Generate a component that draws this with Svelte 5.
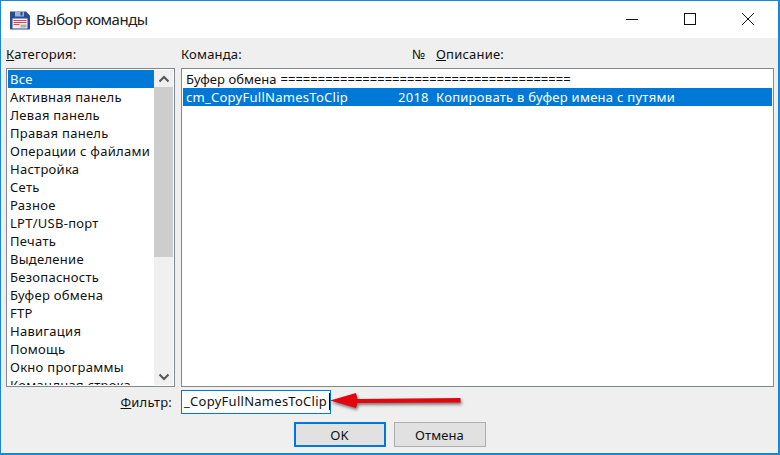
<script>
  const cats = ['Все','Активная панель','Левая панель','Правая панель','Операции с файлами','Настройка','Сеть','Разное','LPT/USB-порт','Печать','Выделение','Безопасность','Буфер обмена','FTP','Навигация','Помощь','Окно программы','Командная строка'];
  const eq = '='.repeat(39);
</script>

<div class="win">
  <header class="title">
    <svg class="appicon" width="20" height="20" viewBox="0 0 20 20">
      <path d="M0 1.500h16l4 4v13a1 1 0 0 1-1 1h-18a1 1 0 0 1-1-1z" fill="#2b4c94"/>
      <rect x="5" y="1" width="9" height="5.500" fill="#9db2d8"/>
      <rect x="10.500" y="2" width="2" height="3.500" fill="#2b4c94"/>
      <rect x="2.500" y="8.500" width="15" height="10" fill="#f6eef0"/>
      <path d="M3.500 10.500h13M3.500 12.500h13M3.500 14.500h6" stroke="#e0474f" stroke-width="1"/>
      <path d="M10.500 14.500h6v3h-6z" fill="#aab0c0"/>
    </svg>
    <span class="ttext">Выбор команды</span>
    <div class="caps">
      <svg width="14" height="14" viewBox="0 0 14 14"><path d="M1 7.500h12" stroke="#111" fill="none"/></svg>
      <svg width="14" height="14" viewBox="0 0 14 14"><rect x="1.500" y="1.500" width="11" height="11" stroke="#111" fill="none"/></svg>
      <svg width="14" height="14" viewBox="0 0 14 14"><path d="M1 1l12 12M13 1L1 13" stroke="#111" fill="none"/></svg>
    </div>
  </header>

  <main class="body">
    <div class="labels">
      <span class="lcat"><u>К</u>атегория:</span>
      <span class="lcmd">Команда:</span>
      <span class="lno">№</span>
      <span class="ldesc"><u>О</u>писание:</span>
    </div>

    <div class="lists">
      <div class="box catbox">
        <ul class="cats">
          {#each cats as c, i}
            <li class:sel={i === 0}>{c}</li>
          {/each}
        </ul>
        <div class="sb">
          <div class="sbbtn">
            <svg width="12" height="8" viewBox="0 0 12 8"><path d="M1.500 6.500L6 2l4.500 4.500" stroke="#555" stroke-width="2" fill="none"/></svg>
          </div>
          <div class="thumb"></div>
          <div class="track"></div>
          <div class="sbbtn">
            <svg width="12" height="8" viewBox="0 0 12 8"><path d="M1.500 1.500L6 6l4.500-4.500" stroke="#555" stroke-width="2" fill="none"/></svg>
          </div>
        </div>
      </div>
      <div class="box cmdbox">
        <div class="row"><span class="grp">Буфер обмена</span><span class="eq">{eq}</span></div>
        <div class="row sel">
          <span class="c1">cm_CopyFullNamesToClip</span>
          <span class="c2">2018</span>
          <span class="c3">Копировать в буфер имена с путями</span>
        </div>
      </div>
    </div>

    <div class="filter">
      <label class="flabel" for="flt"><u>Ф</u>ильтр:</label>
      <div class="input" id="flt"><span class="itext">_CopyFullNamesToClip</span><i class="caret"></i></div>
      <svg class="arrow" width="140" height="24" viewBox="0 0 140 24">
        <path d="M0 10.500L26 3l1.500 6 103-1v4.500l-103 .5-1.500 5z" fill="#e2060f"/>
      </svg>
    </div>

    <div class="btns">
      <button class="btn def">OK</button>
      <button class="btn">Отмена</button>
    </div>
  </main>
</div>

<style>
  :global(body) { margin: 0; }
  .win {
    width: 780px; height: 455px; box-sizing: border-box;
    border: 1px solid #1a86d8; border-bottom-width: 2px; border-right-width: 2px;
    background: #efefef; display: flex; flex-direction: column;
    font-family: "Noto Sans", sans-serif; font-size: 13px; letter-spacing: .27px; color: #111; overflow: hidden;
  }
  .title { height: 37px; flex: none; background: #fff; display: flex; align-items: center; padding-left: 9px; }
  .appicon { margin-right: 6px; }
  .ttext { font-size: 15px; letter-spacing: -.5px; color: #222; position: relative; top: -1px; }
  .caps { margin-left: auto; display: flex; gap: 44px; margin-right: 23px; position: relative; top: -1px; }
  .body { flex: 1; display: flex; flex-direction: column; padding: 0 3px 0 5px; position: relative; }
  .labels { height: 30px; flex: none; display: flex; align-items: center; padding-top: 1px; box-sizing: border-box; letter-spacing: .2px; }
  .lcat { width: 175px; }
  .lcmd { width: 231px; }
  .lno { width: 24px; letter-spacing: 0; }
  .lists { display: flex; gap: 6px; height: 319px; flex: none; }
  .box { box-sizing: border-box; border: 1px solid #828790; background: #fff; height: 100%; overflow: hidden; }
  .catbox { width: 169px; flex: none; display: flex; padding: 1px; }
  .cmdbox { flex: 1; padding: 1px 1px; margin-right: 1px; }
  .cats { list-style: none; margin: 0; padding: 0; flex: 1; overflow: hidden; }
  .cats li { height: 18px; line-height: 18px; padding-left: 2px; white-space: nowrap; }
  .sel { background: #0078d7; color: #fff; }
  .sb { width: 19px; flex: none; background: #f0f0f0; display: flex; flex-direction: column; }
  .sbbtn { height: 17px; flex: none; display: flex; align-items: center; justify-content: center; }
  .thumb { height: 170px; flex: none; background: #cdcdcd; }
  .track { flex: 1; }
  .row { height: 18px; line-height: 18px; padding-left: 3px; white-space: pre; display: flex; }
  .grp { letter-spacing: .05px; margin-right: 4px; }
  .eq { letter-spacing: 0; }
  .c1 { width: 212px; }
  .c2 { width: 38px; }
  .filter { height: 28px; flex: none; display: flex; align-items: center; position: relative; box-sizing: border-box; margin-top: 1px; }
  .flabel { width: 175px; padding-right: 9px; box-sizing: border-box; text-align: right; letter-spacing: .2px; }
  .input { box-sizing: border-box; width: 150px; height: 24px; border: 1px solid #0078d7; background: #fff; line-height: 21px; padding-left: 2px; display: flex; overflow: hidden; }
  .caret { width: 1px; height: 17px; background: #000; margin: 2px 0 0 2px; }
  .arrow { position: absolute; left: 324px; top: 2px; overflow: visible; filter: drop-shadow(1px 2px 1.500px rgba(0,0,0,.5)); }
  .btns { display: flex; justify-content: center; gap: 8px; margin-top: 6px; padding-right: 2px; }
  .btn { box-sizing: border-box; width: 92px; height: 25px; background: #e1e1e1; border: 1px solid #adadad; font: inherit; letter-spacing: .1px; color: #111; padding: 0; }
  .def { border: 2px solid #0078d7; }
</style>
